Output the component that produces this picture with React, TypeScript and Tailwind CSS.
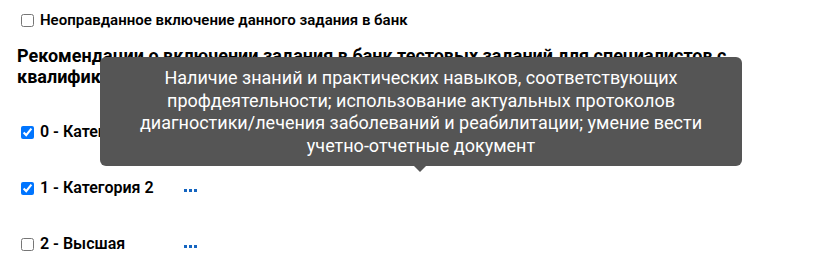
import React from 'react';

// Пункты выбора категории
const categorias = [
  { id: 0, nombre: '0 - Категория 1', marcado: true },
  { id: 1, nombre: '1 - Категория 2', marcado: true },
  { id: 2, nombre: '2 - Высшая', marcado: false },
];

const Puntos: React.FC = () => (
  <span className="flex items-center gap-[2px] mt-[4px]">
    <span className="w-[3px] h-[3px] bg-[#1565c0]" />
    <span className="w-[3px] h-[3px] bg-[#1565c0]" />
    <span className="w-[3px] h-[3px] bg-[#1565c0]" />
  </span>
);

const App: React.FC = () => {
  return (
    <div
      className="relative w-[817px] h-[269px] bg-white text-black overflow-hidden"
      style={{ fontFamily: 'Roboto, "Noto Sans", sans-serif' }}
    >
      <div className="pl-[17px] pt-[11px]">
        <label className="flex items-center h-[18px] text-[15px] font-semibold">
          <input type="checkbox" className="m-0 ml-[4px] mr-[6px] w-[13px] h-[13px]" />
          <span>Неоправданное включение данного задания в банк</span>
        </label>

        <h3 className="mt-[16px] w-[740px] text-[18px] font-bold leading-[21px]">
          Рекомендации о включении задания в банк тестовых заданий для специалистов с квалификационной категорией
        </h3>

        <div className="mt-[36px] flex flex-col gap-[38px]">
          {categorias.map((c) => (
            <label key={c.id} className="flex items-center h-[18px] text-[16px] font-semibold">
              <input
                type="checkbox"
                defaultChecked={c.marcado}
                className="m-0 ml-[4px] mr-[6px] w-[13px] h-[13px]"
              />
              <span className="w-[144px]">{c.nombre}</span>
              <Puntos />
            </label>
          ))}
        </div>
      </div>

      {/* Tooltip */}
      <div className="absolute left-[100px] top-[57px] w-[642px] h-[109px] rounded-[6px] bg-[#555555] text-white text-[18px] leading-[22.5px] text-center pt-[10px]">
        Наличие знаний и практических навыков, соответствующих
        <br />
        профдеятельности; использование актуальных протоколов
        <br />
        диагностики/лечения заболеваний и реабилитации; умение вести
        <br />
        учетно-отчетные документ
        <div className="absolute left-[314px] top-[109px] w-0 h-0 border-l-[6px] border-r-[6px] border-t-[6px] border-l-transparent border-r-transparent border-t-[#555555]" />
      </div>
    </div>
  );
};

export default App;
